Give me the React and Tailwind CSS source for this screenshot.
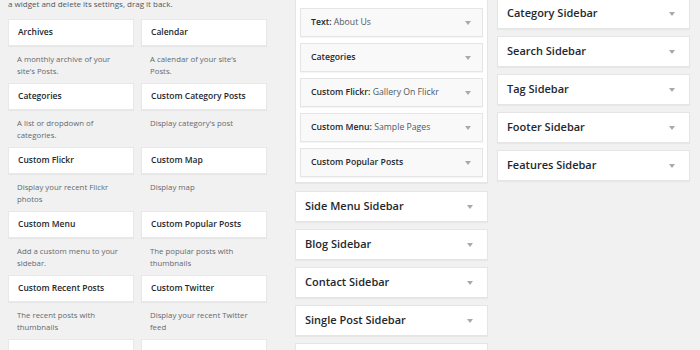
import React from "react";

const available = [
  ["Archives", "A monthly archive of your site’s Posts."],
  ["Calendar", "A calendar of your site’s Posts."],
  ["Categories", "A list or dropdown of categories."],
  ["Custom Category Posts", "Display category's post"],
  ["Custom Flickr", "Display your recent Flickr photos"],
  ["Custom Map", "Display map"],
  ["Custom Menu", "Add a custom menu to your sidebar."],
  ["Custom Popular Posts", "The popular posts with thumbnails"],
  ["Custom Recent Posts", "The recent posts with thumbnails"],
  ["Custom Twitter", "Display your recent Twitter feed"],
  ["", ""],
  ["", ""],
];

const inWidgets = [
  ["Text:", "About Us"],
  ["Categories", ""],
  ["Custom Flickr:", "Gallery On Flickr"],
  ["Custom Menu:", "Sample Pages"],
  ["Custom Popular Posts", ""],
];

const midSidebars = ["Side Menu Sidebar", "Blog Sidebar", "Contact Sidebar", "Single Post Sidebar", ""];
const rightSidebars = ["Category Sidebar", "Search Sidebar", "Tag Sidebar", "Footer Sidebar", "Features Sidebar"];

function Arrow() {
  return (
    <span className="w-0 h-0 border-l-[3px] border-r-[3px] border-t-[4px] border-l-transparent border-r-transparent border-t-[#a7aaad]" />
  );
}

export default function App() {
  return (
    <div
      className="w-[700px] h-[350px] overflow-hidden bg-[#f1f1f1] flex items-start"
      style={{ fontFamily: '"Open Sans", "Noto Sans", sans-serif' }}
    >
      {/* Available widgets */}
      <div className="ml-[8px] w-[259px] flex flex-col">
        <p className="mt-[-2px] mb-[9px] text-[8px] leading-[12px] text-[#50575e] whitespace-nowrap">
          a widget and delete its settings, drag it back.
        </p>
        <div className="grid grid-cols-[126px_126px] gap-x-[7px]">
          {available.map(([t, d], i) => (
            <div key={i} className="h-[64px] flex flex-col">
              <div className="h-[27px] bg-white border border-[#e8e8e8] shadow-[0_1px_1px_rgba(0,0,0,0.04)] flex items-center pl-[9px] text-[8.5px] font-semibold text-[#23282d]">
                {t}
              </div>
              <p className="mt-[7px] pl-[9px] pr-[10px] text-[7.8px] leading-[12px] text-[#646970]">{d}</p>
            </div>
          ))}
        </div>
      </div>

      {/* Middle column */}
      <div className="ml-[28px] w-[193px] flex flex-col">
        <div className="mt-[-10px] bg-white border border-[#e5e5e5] shadow-[0_1px_1px_rgba(0,0,0,0.04)] px-[4px] pt-[17px] pb-[5px] flex flex-col gap-[6px]">
          {inWidgets.map(([a, b]) => (
            <div
              key={a}
              className="h-[29px] bg-[#f9f9f9] border border-[#e5e5e5] shadow-[0_1px_1px_rgba(0,0,0,0.04)] flex items-center justify-between pl-[10px] pr-[11px]"
            >
              <span className="text-[8.7px] text-[#23282d] whitespace-nowrap">
                <span className="font-semibold">{a}</span>
                {b && <span className="text-[#50575e]"> {b}</span>}
              </span>
              <Arrow />
            </div>
          ))}
        </div>
        <div className="mt-[8px] flex flex-col gap-[7px]">
          {midSidebars.map((s, i) => (
            <div
              key={i}
              className="h-[31px] bg-white border border-[#e5e5e5] shadow-[0_1px_1px_rgba(0,0,0,0.04)] flex items-center justify-between pl-[9px] pr-[14px]"
            >
              <span className="text-[11px] font-semibold text-[#23282d] whitespace-nowrap">{s}</span>
              {s && <Arrow />}
            </div>
          ))}
        </div>
      </div>

      {/* Right column */}
      <div className="ml-[9px] w-[193px] mt-[-2px] flex flex-col gap-[7px]">
        {rightSidebars.map((s) => (
          <div
            key={s}
            className="h-[31px] bg-white border border-[#e5e5e5] shadow-[0_1px_1px_rgba(0,0,0,0.04)] flex items-center justify-between pl-[9px] pr-[14px]"
          >
            <span className="text-[11px] font-semibold text-[#23282d] whitespace-nowrap">{s}</span>
            <Arrow />
          </div>
        ))}
      </div>
    </div>
  );
}
